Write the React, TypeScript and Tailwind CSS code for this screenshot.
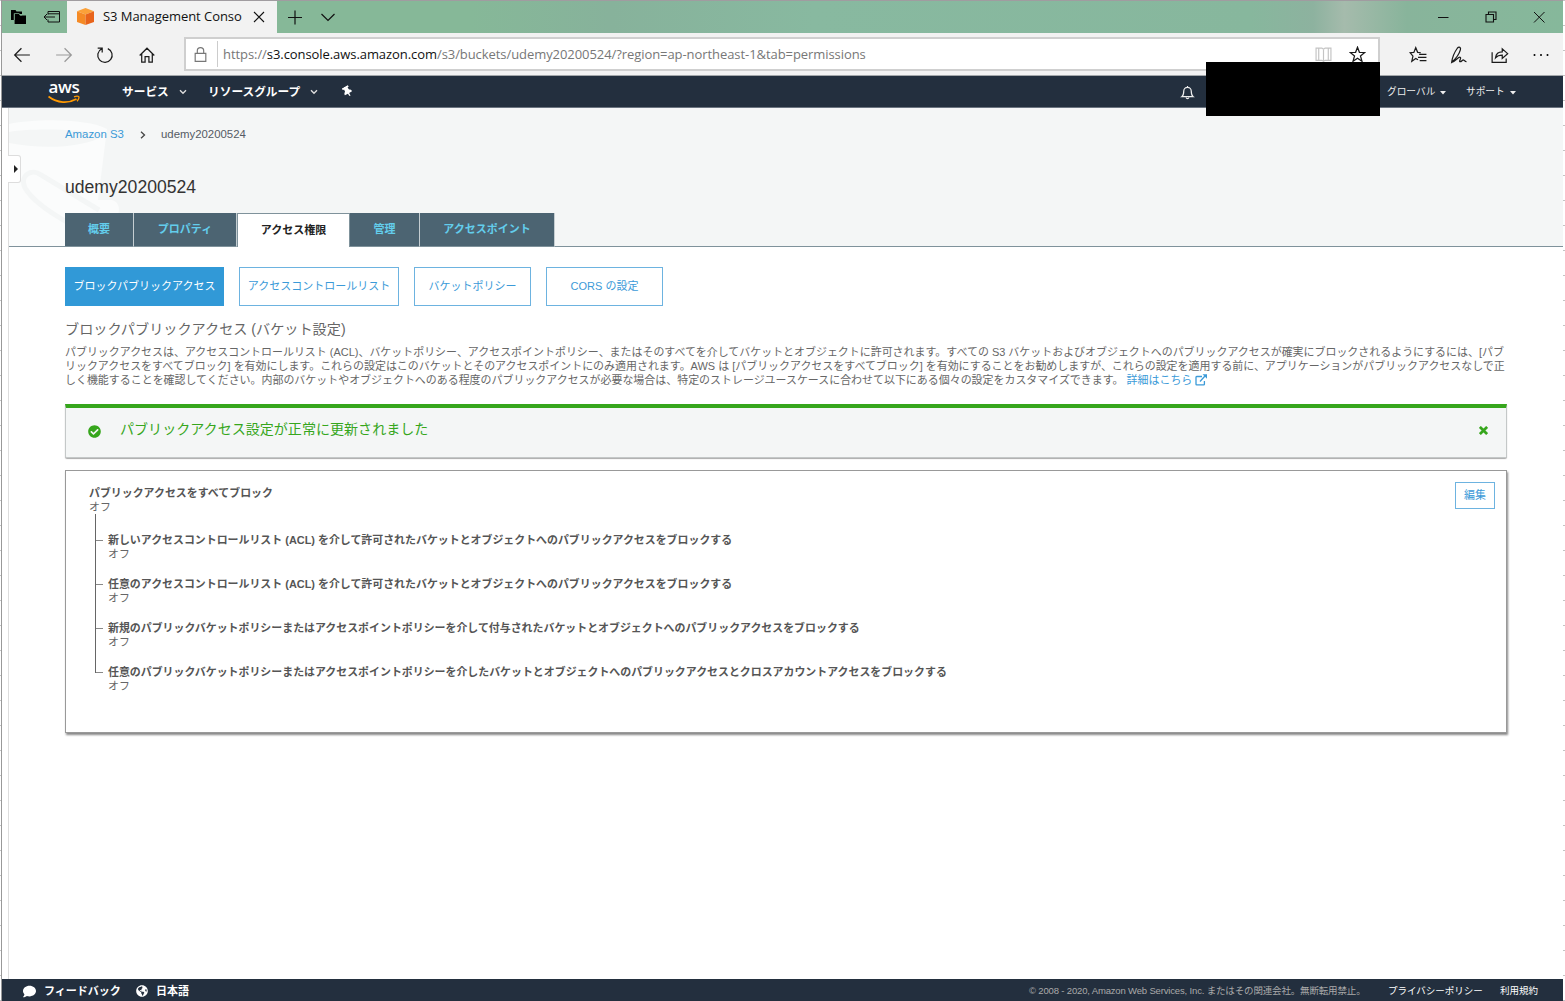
import type { ReactNode } from 'react'
import { FaThumbtack, FaCheckCircle, FaComment, FaGlobeAmericas } from 'react-icons/fa'

const TABS = [
  { label: '概要', width: 'w-[69px]' },
  { label: 'プロパティ', width: 'w-[103px]' },
  { label: 'アクセス権限', width: 'w-[113px]', active: true },
  { label: '管理', width: 'w-[70px]' },
  { label: 'アクセスポイント', width: 'w-[135px]' },
]

const SECTIONS = [
  { label: 'ブロックパブリックアクセス', width: 'w-[159px]', active: true },
  { label: 'アクセスコントロールリスト', width: 'w-[160px]' },
  { label: 'バケットポリシー', width: 'w-[117px]' },
  { label: 'CORS の設定', width: 'w-[117px]' },
]

const SETTINGS = [
  '新しいアクセスコントロールリスト (ACL) を介して許可されたバケットとオブジェクトへのパブリックアクセスをブロックする',
  '任意のアクセスコントロールリスト (ACL) を介して許可されたバケットとオブジェクトへのパブリックアクセスをブロックする',
  '新規のパブリックバケットポリシーまたはアクセスポイントポリシーを介して付与されたバケットとオブジェクトへのパブリックアクセスをブロックする',
  '任意のパブリックバケットポリシーまたはアクセスポイントポリシーを介したバケットとオブジェクトへのパブリックアクセスとクロスアカウントアクセスをブロックする',
]

function Icon({ children, className = 'size-4' }: { children: ReactNode; className?: string }) {
  return (
    <svg viewBox="0 0 16 16" fill="none" stroke="currentColor" strokeWidth="1.1" className={`shrink-0 ${className}`}>
      {children}
    </svg>
  )
}

function TitleBar() {
  return (
    <div className="flex h-[33px] shrink-0 border-t border-[#a09ca0] bg-[linear-gradient(90deg,#86b898_0%,#86b898_30%,#87b29b_39%,#88b9a0_52%,#87b79d_80%,#8db29f_84%,#a5bbac_86%,#88b49b_90%,#86b89b_100%)] text-[#111]">
      <div className="flex w-[65px] items-center pl-[9px]">
        <svg viewBox="0 0 16 16" className="size-4">
          <path d="M0 1h4.500l1 1.500H11V5H3v6H0z" fill="#000" />
          <path d="M3.600 5h4.600l.8 1.400h6V15H3.600z" fill="#000" />
          <path d="M3.200 11V4.500h5l.9 1.500H11" stroke="#86b898" strokeWidth=".7" fill="none" />
        </svg>
        <svg viewBox="0 0 18 14" className="ml-[16px] h-[14px] w-[18px]" fill="none" stroke="currentColor" strokeWidth="1">
          <path d="M5 4.500v-3h11.500v10.500H5V9.500M5 3.800h11.500M12 7H1M4 4 1 7l3 3" />
        </svg>
      </div>
      <div className="flex w-[210px] items-center bg-[#f2f2f2] pl-[10px]">
        <svg viewBox="0 0 17 18" className="h-[18px] w-[17px] shrink-0">
          <path d="M8.500 0 17 3.200 8.500 6.500 0 3.200z" fill="#fba139" />
          <path d="M0 3.200 8.500 6.500V17L0 14z" fill="#f58a25" />
          <path d="M17 3.200 8.500 6.500V17L17 14z" fill="#e8641b" />
        </svg>
        <span className="ml-[9px] w-[142px] whitespace-nowrap font-['Open_Sans',sans-serif] text-[13px] tracking-[-0.05px]">
          S3 Management Conso
        </span>
        <Icon className="ml-[6px] size-4">
          <path d="m3 3 10 10M13 3 3 13" />
        </Icon>
      </div>
      <div className="flex flex-1 items-center pl-[10px]">
        <Icon>
          <path d="M8 1.500v14M1 8.500h14" strokeWidth="1.200" />
        </Icon>
        <Icon className="ml-[17px] size-4">
          <path d="m1.500 5 6.500 6.500L14.500 5" strokeWidth="1.200" />
        </Icon>
        <div className="ml-auto flex items-center gap-8 pr-[16px]">
          <Icon>
            <path d="M3 8.500h10.500" strokeWidth="1" />
          </Icon>
          <Icon>
            <path d="M3 5.500h7.500V13H3zM5.500 5.500V3H13v7.500h-2.500" />
          </Icon>
          <Icon>
            <path d="m3 3 10.500 10.500M13.500 3 3 13.500" strokeWidth="1" />
          </Icon>
        </div>
      </div>
    </div>
  )
}

function AddressBar() {
  return (
    <div className="flex h-[43px] shrink-0 items-center border-b border-[#a3a7aa] bg-[#f2f2f2] text-[#1b1b1b]">
      <div className="flex w-[182px] items-center gap-[23.5px] pt-px pl-[11px]">
        <Icon className="size-[18px]">
          <path d="M15 8H1.500M7.500 2l-6 6 6 6" />
        </Icon>
        <Icon className="size-[18px] text-[#999]">
          <path d="M1 8h13.500M8.500 2l6 6-6 6" />
        </Icon>
        <Icon className="size-[18px]">
          <path d="M10.500 2.300A6.400 6.400 0 1 1 5 2.500M1.500 1.800h4v4" />
        </Icon>
        <Icon className="size-[18px]">
          <path d="M1.500 8.500 8 2l6.500 6.500M3.300 7v7.300h3V9.500h3.400v4.800h3V7" />
        </Icon>
      </div>
      <div className="flex h-[34px] w-[1196px] items-center border-2 border-[#cfcfcf] bg-white pl-[6px]">
        <Icon className="size-[17px] text-[#777]">
          <path d="M3 7h10v7.500H3zM5 7V4.500a3 3 0 0 1 6 0V7" />
        </Icon>
        <div className="ml-[8px] h-[26px] w-px bg-[#ccc]" />
        <div className="ml-[5px] pt-px whitespace-nowrap font-['Open_Sans',sans-serif] text-[13px] tracking-[-0.069px] text-[#777]">
          https://<span className="text-[#111]">s3.console.aws.amazon.com</span>
          /s3/buckets/udemy20200524/?region=ap-northeast-1&amp;tab=permissions
        </div>
        <Icon className="ml-auto size-[17px] text-[#c4c4c4]">
          <path d="M1 2h5.500L8 3l1.500-1H15v11.500H9.500L8 14.500l-1.500-1H1zM8 3v11.500M3.500 2v11.500M12.500 2v11.500" />
        </Icon>
        <Icon className="mr-[12px] ml-[17px] size-[17px]">
          <path d="m8 1.200 1.800 4.700 5 .2-4 3.200 1.400 5L8 11.500l-4.200 2.800 1.400-5-4-3.200 5-.2z" strokeWidth="1.200" />
        </Icon>
      </div>
      <div className="ml-auto flex items-center gap-[23px] pt-px pr-[13px]">
        <Icon className="size-[18px]">
          <path d="M10.500 6 7.800 5.700 6 1.500 4.300 5.700 1 6l2.500 3-1 4.500L6 11l2 1.300M6 1.500l1.700 4.200M9 7.500h6.500M8 10.200h7.500M9.500 13h6" />
        </Icon>
        <Icon className="size-[18px]">
          <path d="M1.500 14.500c.5-4 2.500-9 5-12.500C8 .3 10 1.200 9.200 3.500 8 8 5 11.500 1.500 14.500zm0 0c4-1 5.500-5 7.500-4.500 1.500.500-1.500 4 0 4s2-2 3.200-1.500c.8.300.8 1.500 2.500 1.500" />
        </Icon>
        <Icon className="size-[18px]">
          <path d="M1 5.500v9h12.500V11M4 10.500c.5-3.500 2.500-5.200 6-5.200V2.500l4.800 4.300L10 11V8.200c-2.500 0-4.300.5-6 2.300z" />
        </Icon>
        <svg viewBox="0 0 18 4" className="h-1 w-[18px]">
          <circle cx="2.500" cy="2" r="1" />
          <circle cx="9" cy="2" r="1" />
          <circle cx="15.500" cy="2" r="1" />
        </svg>
      </div>
    </div>
  )
}

function Chevron() {
  return (
    <svg viewBox="0 0 8 6" className="h-[6px] w-2" fill="none" stroke="#ddd" strokeWidth="1.4">
      <path d="m1 1.200 3 3 3-3" />
    </svg>
  )
}

function Caret() {
  return (
    <svg viewBox="0 0 6 4" className="h-1 w-[6px]" fill="currentColor">
      <path d="M0 0h6L3 3.600z" />
    </svg>
  )
}

function ConsoleNav() {
  return (
    <div className="relative flex h-[32px] shrink-0 items-center border-b border-[#6b7480] bg-[#232f3e] text-white">
      <div className="ml-[45px] flex w-[34px] flex-col items-center">
        <span className="h-[15px] font-['Open_Sans',sans-serif] text-[17px] leading-[14px] font-semibold tracking-[-0.3px]">aws</span>
        <svg viewBox="0 0 32 9" className="h-[9px] w-8" fill="none" stroke="#f90">
          <path d="M.5 1.500c9 7 20 7 28 2.500" strokeWidth="1.800" />
          <path d="M26 1.800c2-.8 4-.8 4.700-.3.500.8-.2 3-1.700 4.700" strokeWidth="1.300" />
        </svg>
      </div>
      <div className="ml-[41px] flex items-center pt-px text-[11.7px] font-bold whitespace-nowrap">
        <span className="w-[57px]">サービス</span>
        <Chevron />
        <span className="ml-[21px] w-[102px]">リソースグループ</span>
        <Chevron />
        <FaThumbtack className="ml-[24px] size-[11px] -rotate-30" />
      </div>
      <div className="ml-auto flex items-center pt-[2px] text-[9.700px] whitespace-nowrap text-[#eee]">
        <Icon className="mr-[192px] size-[15px]">
          <path d="M2 12.500c2-1.500 2-3.500 2-6a4 4 0 0 1 8 0c0 2.500 0 4.500 2 6zM6.500 13.500c.5 1.500 2.500 1.500 3 0M8 2.500V1" strokeWidth="1.300" />
        </Icon>
        <span className="w-[53px]">グローバル</span>
        <Caret />
        <span className="ml-[20px] w-[44px]">サポート</span>
        <Caret />
        <div className="w-[47px]" />
      </div>
      {/* Redacted account name */}
      <div className="absolute top-[-14px] left-[1204px] z-10 h-[54px] w-[174px] bg-black" />
    </div>
  )
}

function PageHeader() {
  return (
    <div className="relative flex h-[139px] shrink-0 flex-col border-b border-[#7f929b] bg-[#f4f6f6] pl-[56px]">
      <svg viewBox="0 0 120 138" className="absolute top-0 left-0 h-[138px] w-[120px]">
        <path d="M0 16c30-6 80-5 98 5L89 92h14c10 3 8 16 2 20l-22 10v16H0z" fill="#fbfcfc" />
        <path d="M0 24c25-4 70-3 96 3-22 14-66 14-96 8z" fill="#f4f6f6" />
        <path d="M90 102 32 67c-9-7-22 0-16 13 8 13 24 24 42 34" fill="none" stroke="#f4f6f6" strokeWidth="5" />
      </svg>
      <div className="relative mt-[20px] flex h-[14px] items-center text-[11.400px]">
        <span className="w-[75px] text-[#3b9ad8]">Amazon S3</span>
        <svg viewBox="0 0 6 8" className="h-2 w-[6px]" fill="none" stroke="#444" strokeWidth="1.300">
          <path d="m1 .8 3.500 3.200L1 7.200" />
        </svg>
        <span className="ml-[15px] text-[#545b64]">udemy20200524</span>
      </div>
      <h1 className="relative mt-[33px] text-[17.600px] leading-[24px] text-[#333]">udemy20200524</h1>
      <div className="relative mt-auto -mb-px flex h-[34px] text-[11px] font-bold">
        {TABS.map((tab) => (
          <div
            key={tab.label}
            className={`flex items-center justify-center border-r ${tab.width} ${
              tab.active
                ? 'border-t border-l border-[#7f929b] bg-white text-[#222]'
                : 'border-b border-r-[#c5ced2] border-b-[#7f929b] bg-[#4c6472] text-[#63cdec]'
            }`}
          >
            {tab.label}
          </div>
        ))}
      </div>
      {/* Side panel handle */}
      <div className="absolute top-[47px] -left-px flex h-[28px] w-[13px] items-center justify-center rounded-r-[3px] border border-l-0 border-[#ddd] bg-white">
        <svg viewBox="0 0 4 8" className="ml-[3px] h-2 w-1">
          <path d="M0 0v8l4-4z" fill="#222" />
        </svg>
      </div>
    </div>
  )
}

function Description() {
  return (
    <div className="mt-[7px] text-[10.960px] leading-[14px] whitespace-nowrap text-[#666]">
      <p>
        パブリックアクセスは、アクセスコントロールリスト (ACL)、バケットポリシー、アクセスポイントポリシー、またはそのすべてを介してバケットとオブジェクトに許可されます。すべての S3 バケットおよびオブジェクトへのパブリックアクセスが確実にブロックされるようにするには、[パブ
      </p>
      <p>
        リックアクセスをすべてブロック] を有効にします。これらの設定はこのバケットとそのアクセスポイントにのみ適用されます。AWS は [パブリックアクセスをすべてブロック] を有効にすることをお勧めしますが、これらの設定を適用する前に、アプリケーションがパブリックアクセスなしで正
      </p>
      <p>
        しく機能することを確認してください。内部のバケットやオブジェクトへのある程度のパブリックアクセスが必要な場合は、特定のストレージユースケースに合わせて以下にある個々の設定をカスタマイズできます。{' '}
        <a className="text-[#3b9ad8]">
          詳細はこちら{' '}
          <svg viewBox="0 0 12 12" className="inline size-3 align-[-2px]" fill="none" stroke="currentColor" strokeWidth="1.300">
            <path d="M7 2.500H1.700a.7.700 0 0 0-.7.700v7a.7.700 0 0 0 .7.700h7a.7.700 0 0 0 .7-.7V7M5 7.500 10 2" />
            <path d="M7.500.300H12V4.800z" fill="currentColor" stroke="none" />
          </svg>
        </a>
      </p>
    </div>
  )
}

function SettingsPanel() {
  return (
    <div className="mt-[12px] flex h-[263px] items-start border border-[#999] bg-white pt-[15px] pl-[23px] text-[10.930px] leading-[14px] text-[#666] shadow-[1px_2px_2px_#888]">
      <div className="whitespace-nowrap">
        <p className="font-bold text-[#555]">パブリックアクセスをすべてブロック</p>
        <p>オフ</p>
        <div className="ml-[6px] flex">
          <div className="h-[159px] w-px bg-[#666]" />
          <ul className="pt-[19px]">
            {SETTINGS.map((setting) => (
              <li key={setting} className="mb-[16px] flex h-[28px]">
                <div className="mt-[7px] h-px w-[7px] bg-[#888]" />
                <div className="ml-[5px]">
                  <p className="font-bold text-[#555]">{setting}</p>
                  <p>オフ</p>
                </div>
              </li>
            ))}
          </ul>
        </div>
      </div>
      <button className="mt-[-4px] mr-[11px] ml-auto h-[27px] w-[40px] border border-[#6db3e0] pb-px text-[#3b9ad8]">編集</button>
    </div>
  )
}

function Footer() {
  return (
    <div className="flex h-[22px] shrink-0 items-center bg-[#232f3e] pt-[2px] pl-[21px] whitespace-nowrap text-white">
      <FaComment className="size-[13px]" />
      <span className="ml-[8px] w-[92px] text-[11px] font-bold">フィードバック</span>
      <FaGlobeAmericas className="size-[12px]" />
      <span className="ml-[8px] text-[11px] font-bold">日本語</span>
      <div className="ml-auto flex text-[9.500px]">
        <span className="w-[359px] tracking-[-0.160px] text-[#aaa]">© 2008 - 2020, Amazon Web Services, Inc. またはその関連会社。無断転用禁止。</span>
        <span className="w-[112px]">プライバシーポリシー</span>
        <span className="w-[63px]">利用規約</span>
      </div>
    </div>
  )
}

export default function App() {
  return (
    <div
      lang="ja"
      className="h-[1001px] w-[1565px] overflow-hidden bg-[linear-gradient(180deg,#c4c4c4_0px,#c4c4c4_1px,#fff_1px,#fff_25px)] bg-[length:100%_25px] font-['Liberation_Sans','Noto_Sans_CJK_JP',sans-serif]"
    >
      <div className="ml-px flex h-full w-[1562px] flex-col border-l border-[#999] bg-white">
        <TitleBar />
        <AddressBar />
        <ConsoleNav />
        <main className="ml-[6px] flex flex-1 flex-col border-l border-[#ddd]">
          <PageHeader />
          <div className="pr-[56px] pl-[56px]">
            <div className="mt-[20px] flex h-[39px] gap-[15px] text-[11px]">
              {SECTIONS.map((section) => (
                <button
                  key={section.label}
                  className={`border whitespace-nowrap ${section.width} ${
                    section.active ? 'border-[#3199d7] bg-[#3199d7] text-white' : 'border-[#6db3e0] text-[#3b9ad8]'
                  }`}
                >
                  {section.label}
                </button>
              ))}
            </div>
            <h2 className="mt-[14px] text-[14.150px] leading-[18px] text-[#666]">ブロックパブリックアクセス (バケット設定)</h2>
            <Description />
            <div className="mt-[17px] flex h-[54px] items-center rounded-b-[2px] border border-t-4 border-[#c4c8c8] border-t-[#36a61c] bg-[#f4f6f6] pr-[18px] pb-[5px] pl-[22px] text-[#36a61c] shadow-[0_1px_1px_#aaa]">
              <FaCheckCircle className="mt-[2px] size-[13px]" />
              <span className="ml-[19px] text-[14.050px]">パブリックアクセス設定が正常に更新されました</span>
              <svg viewBox="0 0 10 10" className="ml-auto size-[9px]" stroke="currentColor" strokeWidth="3">
                <path d="m1 1 8 8M9 1 1 9" />
              </svg>
            </div>
            <SettingsPanel />
          </div>
        </main>
        <Footer />
      </div>
    </div>
  )
}
